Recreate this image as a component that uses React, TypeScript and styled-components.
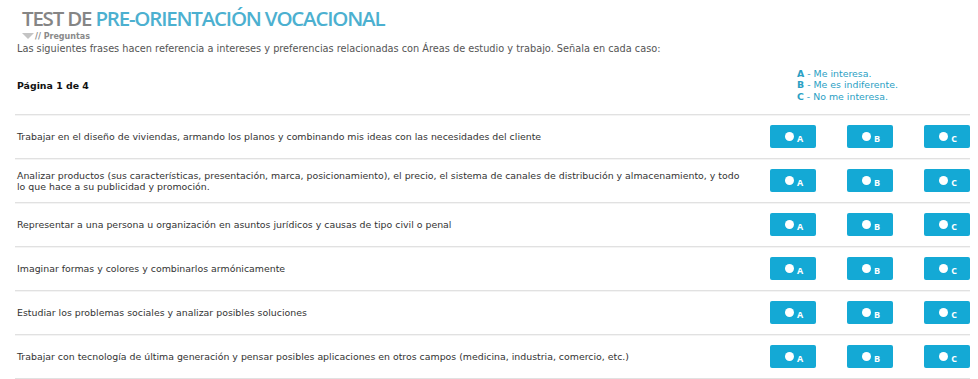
import React from 'react';
import styled, { createGlobalStyle } from 'styled-components';

const GlobalStyle = createGlobalStyle`
  html, body {
    margin: 0;
    padding: 0;
    background: #ffffff;
  }
  body {
    font-family: "DejaVu Sans", Verdana, sans-serif;
  }
`;

const Page = styled.div`
  width: 978px;
  height: 379px;
  overflow: hidden;
  padding: 0 8px 0 15px;
  box-sizing: border-box;
`;

const TitleBlock = styled.div`
  padding: 7px 0 0 7px;
`;

const Title = styled.h1`
  margin: 0;
  font-family: "Open Sans", sans-serif;
  font-weight: 600;
  font-size: 20.5px;
  line-height: 23px;
  letter-spacing: -1.2px;
  color: #858585;
`;

const TitleAccent = styled.span`
  color: #4cb0d0;
`;

const SubTitle = styled.div`
  display: flex;
  align-items: center;
  height: 10px;
  margin-top: 2px;
  font-size: 8px;
  line-height: 10px;
  font-weight: bold;
  color: #8a8a8a;
`;

const Arrow = styled.span`
  width: 0;
  height: 0;
  border-left: 6px solid transparent;
  border-right: 6px solid transparent;
  border-top: 6px solid #c4c4c4;
  margin-right: 1px;
  margin-top: -3px;
`;

const Intro = styled.p`
  margin: 1px 0 0 2px;
  font-size: 9.75px;
  line-height: 12px;
  color: #555555;
`;

const Table = styled.div`
  margin-top: 4px;
`;

const Row = styled.div<{ head?: boolean }>`
  display: grid;
  grid-template-columns: 1fr 200px;
  align-items: center;
  height: ${p => (p.head ? '55px' : '43px')};
  border-bottom: 1px solid #e1e1e1;
  box-shadow: 0 1px 0 #f4f4f4;
`;

const PageLabel = styled.div`
  padding-left: 2px;
  margin-top: -2px;
  font-size: 9.4px;
  font-weight: bold;
  color: #111111;
`;

const Legend = styled.div`
  padding-left: 27px;
  margin-top: -3px;
  font-size: 9.4px;
  line-height: 11.5px;
  color: #2aa0c4;
`;

const LegendKey = styled.b`
  font-weight: bold;
`;

const Question = styled.div`
  padding: 0 20px 0 2px;
  font-size: 9.4px;
  line-height: 11px;
  color: #333333;
`;

const Options = styled.div`
  display: flex;
  gap: 31px;
`;

const OptionButton = styled.button`
  display: flex;
  align-items: center;
  justify-content: center;
  width: 46px;
  height: 23px;
  padding: 0 0 0 2px;
  border: none;
  border-radius: 2px;
  background: #14a9d5;
  cursor: pointer;
  font-family: "Open Sans", sans-serif;
  font-weight: bold;
  font-size: 9px;
  color: #ffffff;
`;

const Dot = styled.span`
  width: 9px;
  height: 9px;
  border-radius: 50%;
  background: #ffffff;
  margin-right: 3px;
`;

const Letter = styled.span`
  margin-top: 4px;
  line-height: 9px;
`;

const questions = [
  'Trabajar en el diseño de viviendas, armando los planos y combinando mis ideas con las necesidades del cliente',
  'Analizar productos (sus características, presentación, marca, posicionamiento), el precio, el sistema de canales de distribución y almacenamiento, y todo lo que hace a su publicidad y promoción.',
  'Representar a una persona u organización en asuntos jurídicos y causas de tipo civil o penal',
  'Imaginar formas y colores y combinarlos armónicamente',
  'Estudiar los problemas sociales y analizar posibles soluciones',
  'Trabajar con tecnología de última generación y pensar posibles aplicaciones en otros campos (medicina, industria, comercio, etc.)',
];

const App: React.FC = () => {
  return (
    <>
      <GlobalStyle />
      <Page>
        <TitleBlock>
          <Title>
            TEST DE <TitleAccent>PRE-ORIENTACIÓN VOCACIONAL</TitleAccent>
          </Title>
          <SubTitle>
            <Arrow />
            // Preguntas
          </SubTitle>
        </TitleBlock>
        <Intro>
          Las siguientes frases hacen referencia a intereses y preferencias relacionadas con Áreas de estudio y
          trabajo. Señala en cada caso:
        </Intro>

        <Table>
          <Row head>
            <PageLabel>Página 1 de 4</PageLabel>
            <Legend>
              <div><LegendKey>A</LegendKey> - Me interesa.</div>
              <div><LegendKey>B</LegendKey> - Me es indiferente.</div>
              <div><LegendKey>C</LegendKey> - No me interesa.</div>
            </Legend>
          </Row>
          {questions.map((q, i) => (
            <Row key={i}>
              <Question>{q}</Question>
              <Options>
                {['A', 'B', 'C'].map(l => (
                  <OptionButton key={l}>
                    <Dot />
                    <Letter>{l}</Letter>
                  </OptionButton>
                ))}
              </Options>
            </Row>
          ))}
        </Table>
      </Page>
    </>
  );
};

export default App;
